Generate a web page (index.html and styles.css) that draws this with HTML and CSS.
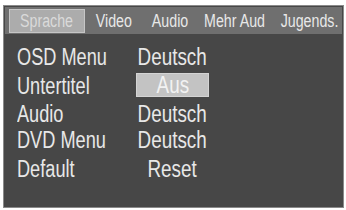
FILE: index.html
```html
<!DOCTYPE html>
<html lang="de">
<head>
    <meta charset="UTF-8">
    <meta name="viewport" content="width=device-width, initial-scale=1.0">
    <title>DVD Setup - Sprache</title>
    <link rel="stylesheet" href="styles.css">
</head>
<body>
<main>
    <div class="osd">
        <div class="tabs">
            <div class="tab active"><span class="txt">Sprache</span></div>
            <div class="tab tab-video"><span class="txt">Video</span></div>
            <div class="tab tab-audio"><span class="txt">Audio</span></div>
            <div class="tab tab-more"><span class="txt">Mehr Aud</span></div>
            <div class="tab tab-kids"><span class="txt">Jugends.</span></div>
        </div>
        <div class="settings">
            <div class="label"><span class="txt">OSD Menu</span></div>
            <div class="value"><span class="txt">Deutsch</span></div>
            <div class="label"><span class="txt">Untertitel</span></div>
            <div class="value selected"><span class="txt">Aus</span></div>
            <div class="label"><span class="txt">Audio</span></div>
            <div class="value"><span class="txt">Deutsch</span></div>
            <div class="label"><span class="txt">DVD Menu</span></div>
            <div class="value"><span class="txt">Deutsch</span></div>
            <div class="label"><span class="txt">Default</span></div>
            <div class="value"><span class="txt">Reset</span></div>
        </div>
    </div>
</main>
</body>
</html>
```

FILE: styles.css
```css
body {
    margin: 0;
    background-color: #ffffff;
    font-family: "Liberation Sans", Arial, sans-serif;
    color: #e8e8e8;
}

/* the OSD font is a narrow sans, so squeeze Arial-width text */
.txt {
    display: inline-block;
    white-space: nowrap;
    transform: scaleX(0.79);
}

.osd {
    margin: 5px 0 0 3px;
    width: 337px;
    height: 199px;
    padding: 1px;
    border: 1px solid #8a8a8a;
    background-color: #474747;
}

.tabs {
    display: flex;
    align-items: center;
    height: 27px;
    padding-left: 4px;
    background-color: #6f6f6f;
    font-size: 18px;
    line-height: 22px;
}

.tab {
    flex: none;
    display: flex;
    justify-content: center;
}

.tab.active {
    width: 74px;
    height: 22px;
    background-color: #acacac;
    border: 1px solid #c6c6c6;
    color: #dadada;
}

.tab-video {
    width: 58px;
}

.tab-audio {
    width: 55px;
}

.tab-more {
    width: 73px;
}

.tab-kids {
    width: 71px;
}

.tab-kids .txt {
    transform: translateX(3px) scaleX(0.79);
}

.settings {
    display: grid;
    grid-template-columns: 119px 73px;
    grid-template-rows: 29px 28px 26px 29px 27px;
    padding: 10px 0 0 12px;
    font-size: 23px;
    line-height: 27px;
}

.label .txt {
    transform-origin: left center;
}

.value {
    display: flex;
    justify-content: center;
}

.value .txt {
    transform: scaleX(0.82);
}

.selected {
    height: 24px;
    line-height: 23px;
    box-sizing: border-box;
    background-color: #c3c3c3;
    border: 1px solid #d4d4d4;
    color: #f2f2f2;
}
```
